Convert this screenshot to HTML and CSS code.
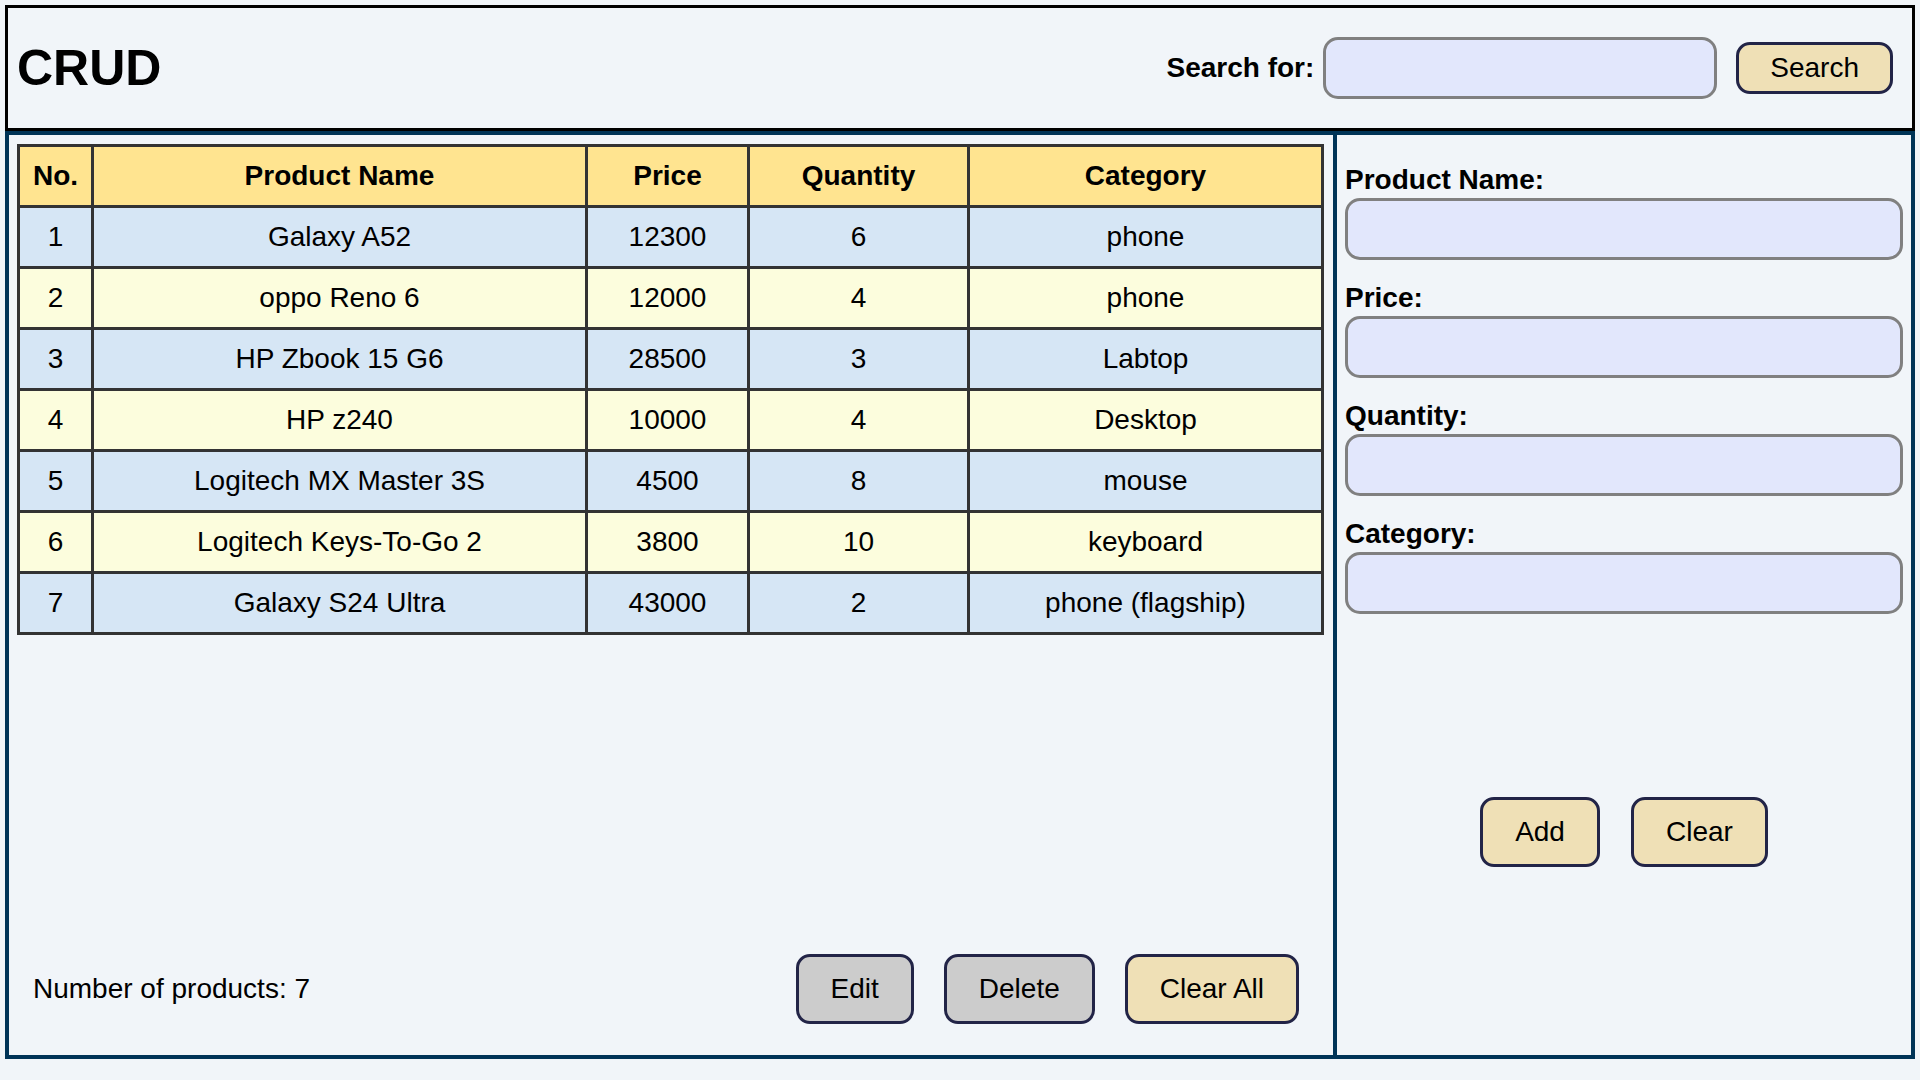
FILE: index.html
```html
<!DOCTYPE html>
<html lang="en">
<head>
<meta charset="utf-8">
<title>CRUD</title>
<link rel="stylesheet" href="styles.css">
</head>
<body>
<header class="top">
  <h1 class="title">CRUD</h1>
  <div class="search">
    <label class="search-label" for="q">Search for:</label>
    <input class="field search-field" id="q" type="text">
    <button class="btn btn-warm">Search</button>
  </div>
</header>
<main class="main">
  <section class="left">
    <table class="products">
      <colgroup>
        <col class="c-no"><col class="c-name"><col class="c-price"><col class="c-qty"><col class="c-cat">
      </colgroup>
      <thead>
        <tr><th>No.</th><th>Product Name</th><th>Price</th><th>Quantity</th><th>Category</th></tr>
      </thead>
      <tbody>
        <tr><td>1</td><td>Galaxy A52</td><td>12300</td><td>6</td><td>phone</td></tr>
        <tr><td>2</td><td>oppo Reno 6</td><td>12000</td><td>4</td><td>phone</td></tr>
        <tr><td>3</td><td>HP Zbook 15 G6</td><td>28500</td><td>3</td><td>Labtop</td></tr>
        <tr><td>4</td><td>HP z240</td><td>10000</td><td>4</td><td>Desktop</td></tr>
        <tr><td>5</td><td>Logitech MX Master 3S</td><td>4500</td><td>8</td><td>mouse</td></tr>
        <tr><td>6</td><td>Logitech Keys-To-Go 2</td><td>3800</td><td>10</td><td>keyboard</td></tr>
        <tr><td>7</td><td>Galaxy S24 Ultra</td><td>43000</td><td>2</td><td>phone (flagship)</td></tr>
      </tbody>
    </table>
    <div class="footer">
      <span class="count">Number of products: 7</span>
      <div class="actions">
        <button class="btn btn-grey">Edit</button>
        <button class="btn btn-grey">Delete</button>
        <button class="btn btn-warm">Clear All</button>
      </div>
    </div>
  </section>
  <aside class="right">
    <div class="form">
      <label class="form-label" for="pn">Product Name:</label>
      <input class="field form-field" id="pn" type="text">
      <label class="form-label" for="pr">Price:</label>
      <input class="field form-field" id="pr" type="text">
      <label class="form-label" for="qt">Quantity:</label>
      <input class="field form-field" id="qt" type="text">
      <label class="form-label" for="ct">Category:</label>
      <input class="field form-field" id="ct" type="text">
    </div>
    <div class="form-actions">
      <button class="btn btn-warm btn-tall">Add</button>
      <button class="btn btn-warm btn-tall">Clear</button>
    </div>
  </aside>
</main>
</body>
</html>
```
FILE: styles.css
```css
* { box-sizing: border-box; }

html, body {
  margin: 0;
  background: #f1f5f9;
}

body {
  padding: 5px;
  font-family: "Liberation Sans", Arial, sans-serif;
  font-size: 28px;
  color: #000;
}

.top {
  height: 126px;
  border: 3px solid #000;
  display: flex;
  align-items: center;
  justify-content: space-between;
  padding: 0 19px 0 9px;
}

.title {
  margin: 0;
  font-size: 50px;
  font-weight: bold;
  line-height: 1;
}

.search {
  display: flex;
  align-items: center;
}

.search-label {
  font-weight: bold;
  margin-right: 9px;
}

.field {
  background: #e2e7fc;
  border: 3px solid #808080;
  border-radius: 15px;
  height: 62px;
  font: inherit;
  padding: 0 12px;
  outline: none;
}

.search-field {
  width: 394px;
  margin-right: 19px;
}

.btn {
  font-family: inherit;
  font-size: 28px;
  line-height: 32px;
  color: #000;
  border: 3px solid #222447;
  border-radius: 14px;
  padding: 7px 31px;
  cursor: pointer;
}

.btn-tall {
  padding: 16px 32px;
}

.btn-warm { background: #efe0b6; }
.btn-grey { background: #cccccc; }

.main {
  height: 928px;
  border: 4px solid #003457;
  display: flex;
}

.left {
  width: 1328px;
  display: flex;
  flex-direction: column;
  justify-content: space-between;
  padding: 9px 10px 0 8px;
  border-right: 4px solid #003457;
}

.products {
  width: 1304px;
  border-collapse: collapse;
  table-layout: fixed;
}

.c-no { width: 74px; }
.c-name { width: 494px; }
.c-price { width: 162px; }
.c-qty { width: 220px; }
.c-cat { width: 354px; }

.products th,
.products td {
  border: 3px solid #333333;
  height: 61px;
  padding: 0;
  text-align: center;
  vertical-align: middle;
  font-size: 28px;
}

.products th {
  background: #ffe490;
  font-weight: bold;
}

.products tbody tr:nth-child(odd) td { background: #d6e6f5; }
.products tbody tr:nth-child(even) td { background: #fcfddd; }

.footer {
  display: flex;
  align-items: center;
  justify-content: space-between;
  padding: 0 24px 31px 16px;
}

.actions {
  display: flex;
  gap: 30px;
}

.actions .btn { padding: 16px 32px; }

.right {
  flex: 1;
  display: flex;
  flex-direction: column;
  padding: 29px 8px 0 8px;
}

.form {
  display: flex;
  flex-direction: column;
}

.form-label {
  font-weight: bold;
  line-height: 32px;
}

.form-field {
  width: 100%;
  margin-top: 2px;
  margin-bottom: 22px;
}

.form-field:last-child { margin-bottom: 0; }

.form-actions {
  flex: 1;
  display: flex;
  justify-content: center;
  align-items: center;
  gap: 31px;
  padding-bottom: 6px;
}
```
